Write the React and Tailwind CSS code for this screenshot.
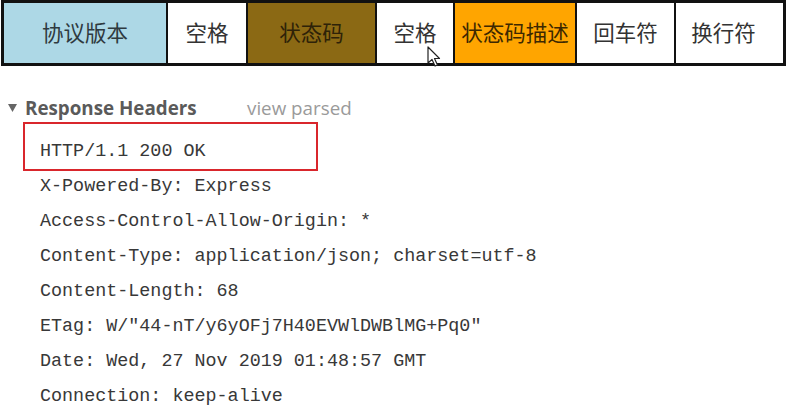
import React from 'react';

const cells = [
  { label: '协议版本', w: 'w-[162px]', bg: 'bg-[#add8e6]', text: 'text-[#2f3a40]' },
  { label: '空格', w: 'w-[80px]', bg: 'bg-white', text: 'text-[#333]' },
  { label: '状态码', w: 'w-[129px]', bg: 'bg-[#8b6914]', text: 'text-[#2e2208]' },
  { label: '空格', w: 'w-[78px]', bg: 'bg-white', text: 'text-[#333]' },
  { label: '状态码描述', w: 'w-[122px]', bg: 'bg-[#ffa500]', text: 'text-[#3d2800]' },
  { label: '回车符', w: 'w-[99px]', bg: 'bg-white', text: 'text-[#333]' },
  { label: '换行符', w: 'w-[97px]', bg: 'bg-white', text: 'text-[#333]' },
];

const headers = [
  'HTTP/1.1 200 OK',
  'X-Powered-By: Express',
  'Access-Control-Allow-Origin: *',
  'Content-Type: application/json; charset=utf-8',
  'Content-Length: 68',
  'ETag: W/"44-nT/y6yOFj7H40EVWlDWBlMG+Pq0"',
  'Date: Wed, 27 Nov 2019 01:48:57 GMT',
  'Connection: keep-alive',
];

export default function App() {
  return (
    <div className="relative w-[787px] h-[420px] overflow-hidden bg-white">
      {/* Message line parts */}
      <div className="ml-[1px] flex h-[66px] w-[785px] border-[3px] border-[#111]">
        {cells.map((c, i) => (
          <div
            key={i}
            className={`${c.w} ${c.bg} ${c.text} flex items-center justify-center pb-[1px] text-[21.5px] ${i > 0 ? 'border-l-2 border-[#111]' : ''}`}
            style={{ fontFamily: '"Noto Sans CJK SC", sans-serif' }}
          >
            {c.label}
          </div>
        ))}
      </div>

      {/* Response headers */}
      <div className="pt-[30px]">
        <div className="flex h-[24px] items-center" style={{ fontFamily: '"Open Sans", sans-serif' }}>
          <svg className="ml-[8px] mr-[8px]" width="9" height="8" viewBox="0 0 9 8">
            <polygon points="0,0 9,0 4.5,8" fill="#666" />
          </svg>
          <span className="w-[222px] text-[18.8px] font-bold text-[#5a5a5a]">Response Headers</span>
          <span className="text-[18.8px] text-[#9a9a9a]">view parsed</span>
        </div>

        <div className="mt-[14px] pl-[40px] text-[18.4px] text-[#383838]" style={{ fontFamily: '"Liberation Mono", monospace' }}>
          {headers.map((h) => (
            <div key={h} className="h-[35px] leading-[35px] whitespace-pre">{h}</div>
          ))}
        </div>
      </div>

      {/* annotation box */}
      <div className="absolute left-[23px] top-[122px] h-[49px] w-[295px] border-2 border-[#d9262c]" />

      {/* mouse cursor */}
      <svg className="absolute left-[427px] top-[46px]" width="14" height="22" viewBox="0 0 14 22">
        <path d="M1 1 L1 17 L5 13.5 L8 20 L10.5 19 L7.5 12.5 L12.5 12.5 Z" fill="#fff" stroke="#222" strokeWidth="1.2" strokeLinejoin="round" />
      </svg>
    </div>
  );
}
